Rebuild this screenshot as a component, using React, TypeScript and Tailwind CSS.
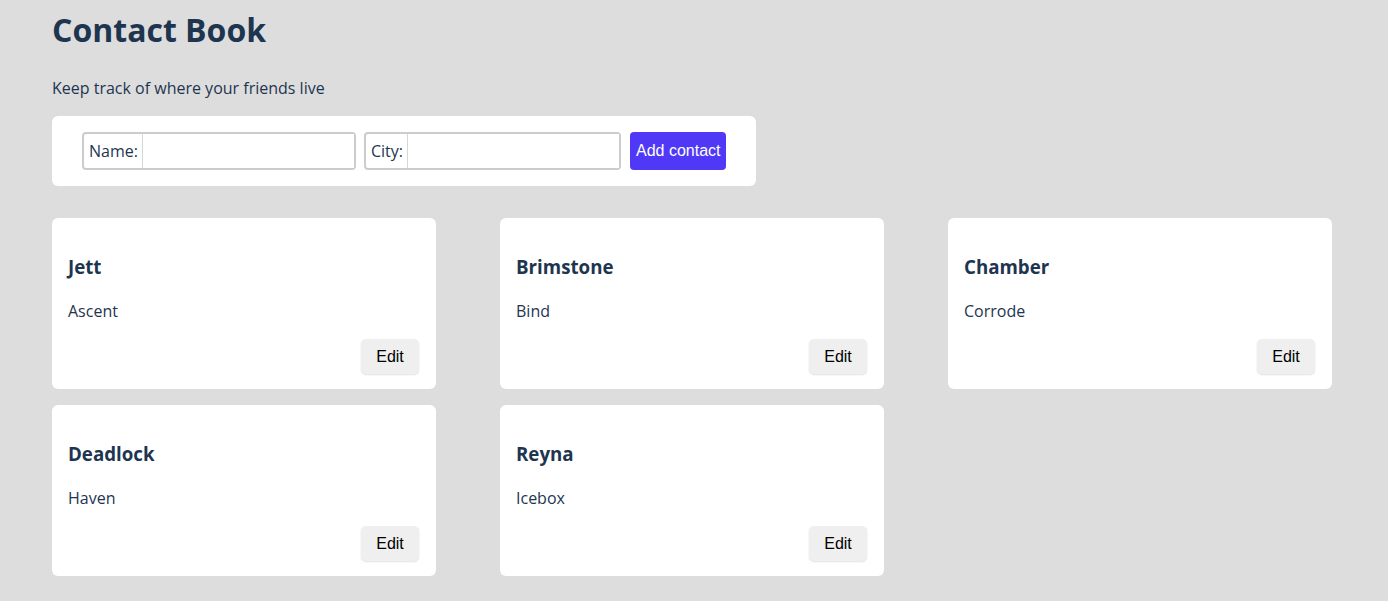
const contacts = [
  { name: "Jett", city: "Ascent" },
  { name: "Brimstone", city: "Bind" },
  { name: "Chamber", city: "Corrode" },
  { name: "Deadlock", city: "Haven" },
  { name: "Reyna", city: "Icebox" },
];

function Field({ label }: { label: string }) {
  return (
    <label className="flex h-[38px] items-stretch rounded-[4px] border-2 border-[#cccccc] bg-white">
      <span className="flex items-center border-r border-[#d6d6d6] pl-[5px] pr-[4px] text-base">
        {label}
      </span>
      <input type="text" className="w-[211px] bg-white px-1 outline-none" />
    </label>
  );
}

export default function App() {
  return (
    <div className="min-h-screen bg-[#dddddd] px-[52px] font-['Open_Sans',sans-serif] text-[#1e3550]">
      <h1 className="pt-[9px] text-[32px] font-bold leading-[42px]">Contact Book</h1>
      <p className="mt-[25px] text-base leading-6">Keep track of where your friends live</p>

      <form
        className="mt-[16px] flex w-[704px] items-center gap-2 rounded-md bg-white px-[30px] pb-4 pt-4"
        onSubmit={(e) => e.preventDefault()}
      >
        <Field label="Name:" />
        <Field label="City:" />
        <button
          type="submit"
          className="ml-px h-[38px] whitespace-nowrap rounded-[4px] bg-[#4f39f6] px-[6px] font-['Liberation_Sans',sans-serif] text-base text-white"
        >
          Add contact
        </button>
      </form>

      <div className="mt-8 grid w-[1280px] grid-cols-3 gap-x-16 gap-y-4">
        {contacts.map((c) => (
          <div key={c.name} className="flex flex-col rounded-md bg-white px-4 pb-[15px] pt-[35px]">
            <h3 className="text-[18.72px] font-bold leading-7">{c.name}</h3>
            <p className="mt-[18px] text-base leading-6">{c.city}</p>
            <div className="mt-4 flex justify-end pr-px">
              <button className="h-[35px] w-[58px] rounded-[5px] bg-[#efefef] font-['Liberation_Sans',sans-serif] text-base text-black shadow-[0_1px_2px_rgba(0,0,0,0.12)]">
                Edit
              </button>
            </div>
          </div>
        ))}
      </div>
    </div>
  );
}
